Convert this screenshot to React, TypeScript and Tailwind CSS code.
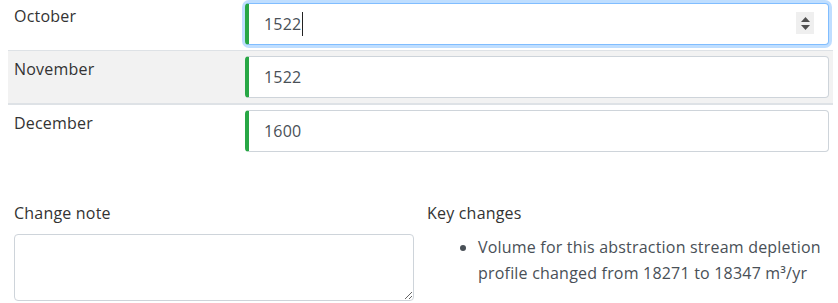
import React from "react";

function ValueBox({ value, focused }: { value: string; focused?: boolean }) {
  return (
    <div
      className={
        "relative flex h-[42px] items-center rounded-[4px] border border-l-4 border-l-[#28a745] bg-white pl-[15px] text-[16px] text-[#495057] " +
        (focused
          ? "border-[#80bdff] shadow-[0_0_0_3px_rgba(0,123,255,0.25)]"
          : "border-[#ced4da]")
      }
    >
      <span>{value}</span>
      {focused && <span className="ml-[1px] inline-block h-[24px] w-px bg-[#222]" />}
      {focused && (
        <div className="absolute right-[14px] top-[8px] flex h-[22px] w-[18px] flex-col items-center justify-center gap-[3px] bg-[#efefef]">
          <svg width="9" height="5" viewBox="0 0 9 5">
            <path d="M0 5 L4.5 0 L9 5 Z" fill="#505050" />
          </svg>
          <svg width="9" height="5" viewBox="0 0 9 5">
            <path d="M0 0 L4.5 5 L9 0 Z" fill="#505050" />
          </svg>
        </div>
      )}
    </div>
  );
}

function Row({
  label,
  value,
  focused,
  grey,
  first,
  thick,
  last,
}: {
  label: string;
  value: string;
  focused?: boolean;
  grey?: boolean;
  first?: boolean;
  thick?: boolean;
  last?: boolean;
}) {
  return (
    <div
      className={
        "flex border-[#dee2e6] pb-[5px] " +
        (first ? "pt-[3px] " : "pt-[5px] ") +
        (last ? "" : thick ? "border-b-2 " : "border-b ") +
        (grey ? "bg-[#f2f2f2]" : "")
      }
    >
      <div className="w-[237px] px-[6px] pt-[1px] text-[16px] leading-[24px] text-[#333]">{label}</div>
      <div className="mr-[4px] flex-1">
        <ValueBox value={value} focused={focused} />
      </div>
    </div>
  );
}

export default function App() {
  return (
    <div
      className="h-[303px] w-[838px] overflow-hidden bg-white tracking-[0.2px]"
      style={{ fontFamily: '"Open Sans", "Noto Sans", sans-serif' }}
    >
      <div className="ml-[8px] mr-[5px]">
        <Row label="October" value="1522" focused first />
        <Row label="November" value="1522" grey thick />
        <Row label="December" value="1600" last />
      </div>
      <div className="ml-[8px] mr-[4px] mt-[44px] grid grid-cols-2">
        <div className="px-[6px]">
          <div className="mb-[9px] text-[16px] leading-[24px] text-[#333]">Change note</div>
          <textarea className="block h-[67px] w-[400px] rounded-[4px] border border-[#ced4da] bg-white" />
        </div>
        <div className="px-[6px]">
          <div className="text-[16px] leading-[24px] text-[#333]">Key changes</div>
          <ul className="mt-[9px] list-disc pl-[51px] text-[16px] leading-[26px] text-[#495057]">
            <li>Volume for this abstraction stream depletion profile changed from 18271 to 18347 m³/yr</li>
          </ul>
        </div>
      </div>
    </div>
  );
}
